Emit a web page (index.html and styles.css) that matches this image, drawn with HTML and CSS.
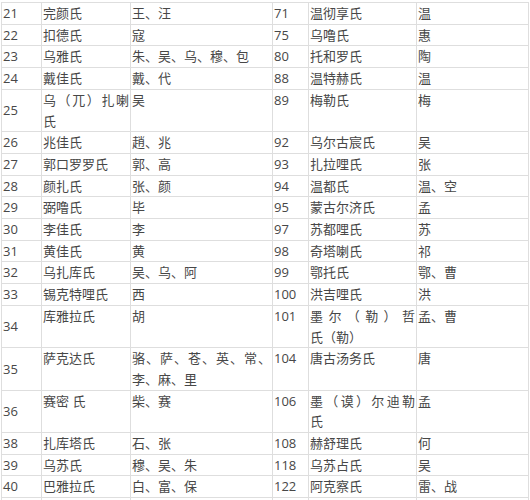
FILE: index.html
```html
<!DOCTYPE html>
<html lang="zh-CN">
<head>
<meta charset="utf-8">
<title>满族姓氏对照表</title>
<link rel="stylesheet" href="styles.css">
</head>
<body>
<table class="surnames">
  <colgroup>
    <col class="c-num-l"><col class="c-name-l"><col class="c-han-l">
    <col class="c-num-r"><col class="c-name-r"><col class="c-han-r">
  </colgroup>
  <tbody>
    <tr><td class="num">21</td><td>完颜氏</td><td>王、汪</td><td class="num-r">71</td><td>温彻享氏</td><td>温</td></tr>
    <tr><td class="num">22</td><td>扣德氏</td><td>寇</td><td class="num-r">75</td><td>乌噜氏</td><td>惠</td></tr>
    <tr><td class="num">23</td><td>乌雅氏</td><td>朱、吴、乌、穆、包</td><td class="num-r">80</td><td>托和罗氏</td><td>陶</td></tr>
    <tr><td class="num">24</td><td>戴佳氏</td><td>戴、代</td><td class="num-r">88</td><td>温特赫氏</td><td>温</td></tr>
    <tr><td class="num">25</td><td><span class="jline">乌（兀）扎喇</span>氏</td><td>吴</td><td class="num-r">89</td><td>梅勒氏</td><td>梅</td></tr>
    <tr><td class="num">26</td><td>兆佳氏</td><td>趙、兆</td><td class="num-r">92</td><td>乌尔古宸氏</td><td>吴</td></tr>
    <tr><td class="num">27</td><td>郭口罗罗氏</td><td>郭、高</td><td class="num-r">93</td><td>扎拉哩氏</td><td>张</td></tr>
    <tr><td class="num">28</td><td>颜扎氏</td><td>张、颜</td><td class="num-r">94</td><td>温都氏</td><td>温、空</td></tr>
    <tr><td class="num">29</td><td>弼噜氏</td><td>毕</td><td class="num-r">95</td><td>蒙古尔济氏</td><td>孟</td></tr>
    <tr><td class="num">30</td><td>李佳氏</td><td>李</td><td class="num-r">97</td><td>苏都哩氏</td><td>苏</td></tr>
    <tr><td class="num">31</td><td>黄佳氏</td><td>黄</td><td class="num-r">98</td><td>奇塔喇氏</td><td>祁</td></tr>
    <tr><td class="num">32</td><td>乌扎库氏</td><td>吴、乌、阿</td><td class="num-r">99</td><td>鄂托氏</td><td>鄂、曹</td></tr>
    <tr><td class="num">33</td><td>锡克特哩氏</td><td>西</td><td class="num-r">100</td><td>洪吉哩氏</td><td>洪</td></tr>
    <tr class="two"><td class="num">34</td><td>库雅拉氏</td><td>胡</td><td class="num-r">101</td><td><span class="jline">墨尔（勒）哲</span>氏（勒）</td><td>孟、曹</td></tr>
    <tr class="two"><td class="num">35</td><td>萨克达氏</td><td><span class="jline">骆、萨、苍、英、常、</span>李、麻、里</td><td class="num-r">104</td><td>唐古汤务氏</td><td>唐</td></tr>
    <tr class="two"><td class="num">36</td><td>赛密 氏</td><td>柴、赛</td><td class="num-r">106</td><td><span class="jline">墨（谟）尔迪勒</span>氏</td><td>孟</td></tr>
    <tr><td class="num">38</td><td>扎库塔氏</td><td>石、张</td><td class="num-r">108</td><td>赫舒理氏</td><td>何</td></tr>
    <tr><td class="num">39</td><td>乌苏氏</td><td>穆、吴、朱</td><td class="num-r">118</td><td>乌苏占氏</td><td>吴</td></tr>
    <tr><td class="num">40</td><td>巴雅拉氏</td><td>白、富、保</td><td class="num-r">122</td><td>阿克察氏</td><td>雷、战</td></tr>
    <tr><td class="num">&nbsp;</td><td>&nbsp;</td><td>&nbsp;</td><td class="num-r">&nbsp;</td><td>&nbsp;</td><td>&nbsp;</td></tr>
  </tbody>
</table>
</body>
</html>
```
FILE: styles.css
```css
html, body {
  margin: 0;
  padding: 0;
  background: #ffffff;
}

body {
  padding: 2px 0 0 1px;
  font-family: "Open Sans", "Noto Sans CJK SC", sans-serif;
  font-size: 13px;
  color: #474747;
}

.surnames {
  border-collapse: collapse;
  table-layout: fixed;
  width: 527px;
}

.c-num-l { width: 40px; }
.c-name-l { width: 89px; }
.c-han-l { width: 142px; }
.c-num-r { width: 36px; }
.c-name-r { width: 108px; }
.c-han-r { width: 112px; }

.surnames td {
  border: 1px solid #dedede;
  padding: 0 1px;
  line-height: 20.7px;
  vertical-align: top;
  white-space: normal;
  overflow: hidden;
}

.surnames td.num {
  vertical-align: middle;
}

.surnames td.num-r {
  vertical-align: top;
}

.jline {
  display: block;
  text-align: justify;
  text-align-last: justify;
  text-justify: inter-character;
}
```
